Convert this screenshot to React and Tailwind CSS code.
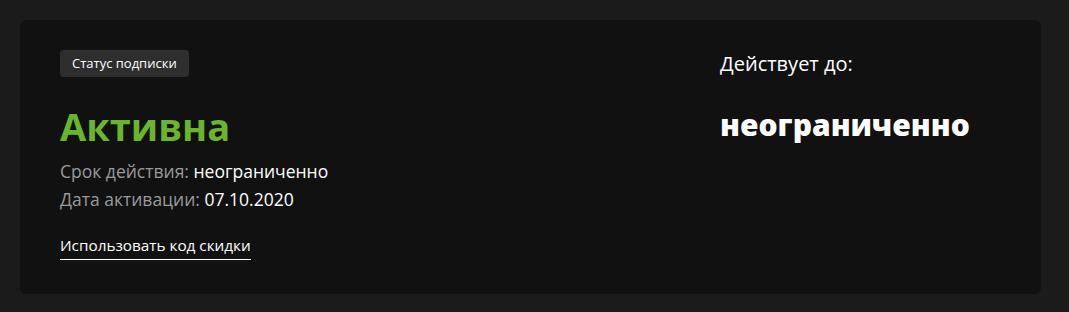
import React from 'react';

const App = () => {
    return (
        <div className="w-full min-h-[312px] bg-[#1b1b1b] p-5 font-['Open_Sans','Noto_Sans',sans-serif]">
            <div className="bg-[#111111] rounded-md h-[274px] w-[1021px] flex pl-10 pt-[30px]">
                <div className="w-[660px] flex flex-col items-start">
                    <span className="bg-[#2e2e2e] text-white text-[13px] px-3 h-[27px] flex items-center rounded">
                        Статус подписки
                    </span>
                    <h1 className="text-[#6bb52b] text-[38px] font-bold leading-none mt-[30px]">Активна</h1>
                    <div className="mt-[12px] text-[17.5px] leading-[28px]">
                        <div className="text-[#9a9a9a]">
                            Срок действия: <span className="text-white font-medium">неограниченно</span>
                        </div>
                        <div className="text-[#9a9a9a]">
                            Дата активации: <span className="text-white font-medium">07.10.2020</span>
                        </div>
                    </div>
                    <a href="#" className="mt-[22px] text-white text-[15.3px] font-medium pb-[4px] border-b border-white leading-[20px]">
                        Использовать код скидки
                    </a>
                </div>
                <div className="flex flex-col">
                    <div className="text-white text-[20px] leading-7">Действует до:</div>
                    <div className="text-white text-[30px] font-extrabold leading-none mt-[32px]">неограниченно</div>
                </div>
            </div>
        </div>
    );
};

export default App;
